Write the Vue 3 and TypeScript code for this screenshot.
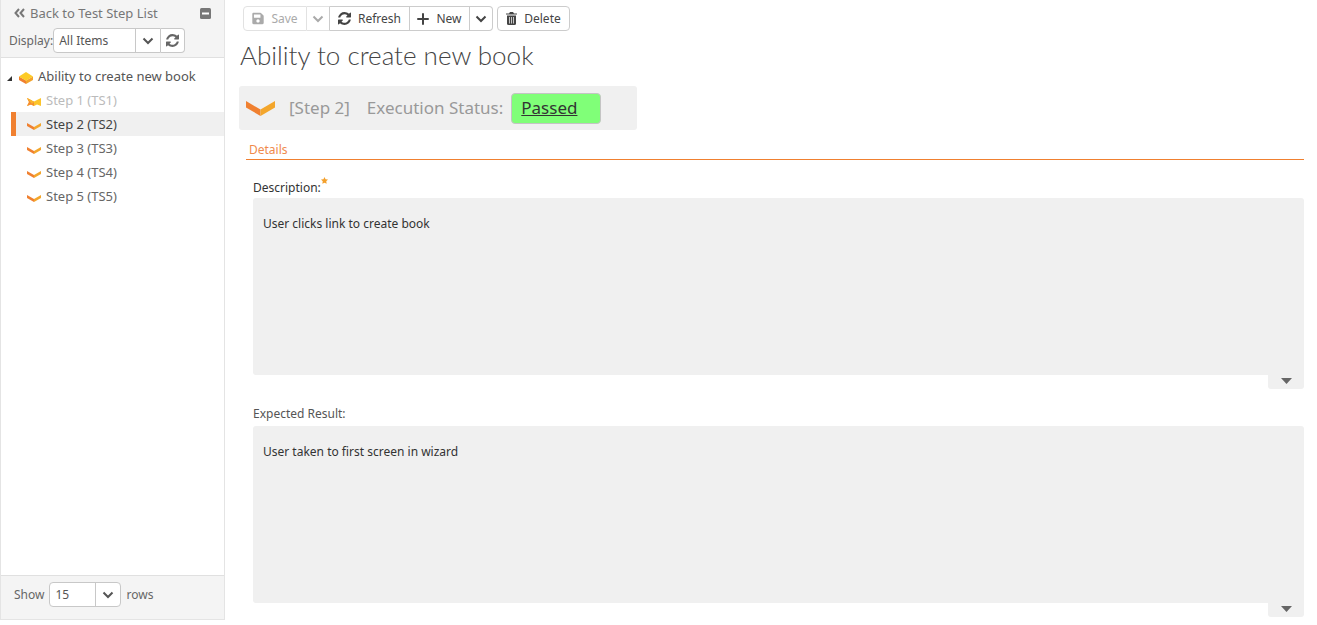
<script setup lang="ts">
import { ref } from 'vue'

interface Step {
  id: number
  name: string
  muted?: boolean
}

const steps: Step[] = [
  { id: 1, name: 'Step 1 (TS1)', muted: true },
  { id: 2, name: 'Step 2 (TS2)' },
  { id: 3, name: 'Step 3 (TS3)' },
  { id: 4, name: 'Step 4 (TS4)' },
  { id: 5, name: 'Step 5 (TS5)' },
]
const selected = ref(2)
const display = ref('All Items')
const rows = ref('15')
const description = ref('User clicks link to create book')
const expected = ref('User taken to first screen in wizard')

const refreshPath =
  'M1511 1056q0 5-1 7-64 268-268 434.5t-478 166.5q-146 0-282.5-55t-243.5-157l-129 129q-19 19-45 19t-45-19-19-45v-448q0-26 19-45t45-19h448q26 0 45 19t19 45-19 45l-137 137q71 66 161 102t187 36q134 0 250-65t186-179q11-17 53-117 8-23 30-23h192q13 0 22.5 9.5t9.5 22.5zm25-800v448q0 26-19 45t-45 19h-448q-26 0-45-19t-19-45 19-45l138-138q-148-137-349-137-134 0-250 65t-186 179q-11 17-53 117-8 23-30 23h-199q-13 0-22.5-9.5t-9.5-22.5v-7q65-268 270-434.5t480-166.5q146 0 284 55.5t245 156.5l130-129q19-19 45-19t45 19 19 45z'
const savePath =
  'M433.941 129.941l-83.882-83.882A48 48 0 0 0 316.118 32H48C21.49 32 0 53.49 0 80v352c0 26.51 21.49 48 48 48h352c26.51 0 48-21.49 48-48V163.882a48 48 0 0 0-14.059-33.941zM224 416c-35.346 0-64-28.654-64-64s28.654-64 64-64 64 28.654 64 64-28.654 64-64 64zm96-304.52V212c0 6.627-5.373 12-12 12H76c-6.627 0-12-5.373-12-12V108c0-6.627 5.373-12 12-12h228.52c3.183 0 6.235 1.264 8.485 3.515l3.48 3.48A11.996 11.996 0 0 1 320 111.48z'
</script>

<template>
  <div class="page">
    <aside class="sidebar">
      <header class="side-head">
        <div class="side-top">
          <a href="#" class="back">
            <svg width="11" height="10" viewBox="0 0 11 10" class="line-icon"><path d="M5 1L1.500 5L5 9M10 1L6.500 5L10 9" /></svg>
            Back to Test Step List
          </a>
          <button type="button" class="collapse" aria-label="Collapse">
            <svg width="11" height="11" viewBox="0 0 11 11"><rect width="11" height="11" rx="1.500" fill="#777" /><rect x="2" y="4.500" width="7" height="2" fill="#fff" /></svg>
          </button>
        </div>
        <div class="display-row">
          <label for="display">Display:</label>
          <div class="combo joined">
            <select id="display" v-model="display" class="wide"><option>All Items</option></select>
            <span class="arrow"><svg width="12" height="8" viewBox="0 0 12 8" class="line-icon"><path d="M1.500 1.500L6 6L10.500 1.500" /></svg></span>
          </div>
          <button type="button" class="reload" aria-label="Reload list">
            <svg width="13" height="13" viewBox="0 128 1536 1536"><path :d="refreshPath" fill="#666" /></svg>
          </button>
        </div>
      </header>

      <nav class="tree">
        <a href="#" class="root">
          <svg class="caret" width="5" height="5" viewBox="0 0 5 5"><path d="M5 0V5H0Z" fill="#333" /></svg>
          <svg class="box" width="14" height="12" viewBox="0 0 14 12"><path d="M0 4.500L7 8.500V12L0 8Z" fill="#f08030" /><path d="M14 4.500L7 8.500V12L14 8Z" fill="#f3a32c" /><path d="M7 0L14 4.500L7 8.700L0 4.500Z" fill="#fdcb27" /></svg>
          <span>Ability to create new book</span>
        </a>
        <a
          v-for="step in steps"
          :key="step.id"
          href="#"
          class="step"
          :class="{ active: step.id === selected, muted: step.muted }"
          @click.prevent="selected = step.id"
        >
          <svg v-if="step.muted" width="14" height="8" viewBox="0 0 14 8"><path d="M0 0L4 2L7 3.500L10 2L14 0V8L10 6.500L7 8L4 6.500L0 8L2 4Z" fill="#fcc42a" /><path d="M0 0L7 4V8L4 6.500L0 8L2 4Z" fill="#f58a32" /><path d="M0 0L3 1.500L7 4L5 6Z" fill="#f9b52c" /></svg>
          <svg v-else width="14" height="7" viewBox="0 0 28 14"><path d="M0 0L14 8V14L0 6Z" fill="#f08030" /><path d="M28 0L14 8V14L28 6Z" fill="#f3a62c" /></svg>
          <span>{{ step.name }}</span>
        </a>
      </nav>

      <footer class="side-foot">
        <label for="rows">Show</label>
        <div class="combo">
          <select id="rows" v-model="rows" class="narrow"><option>15</option></select>
          <span class="arrow"><svg width="12" height="8" viewBox="0 0 12 8" class="line-icon"><path d="M1.500 1.500L6 6L10.500 1.500" /></svg></span>
        </div>
        <span>rows</span>
      </footer>
    </aside>

    <main class="main">
      <div class="toolbar">
        <div class="group">
          <button type="button" disabled class="save"><svg width="12" height="13" viewBox="0 0 448 512"><path :d="savePath" fill="currentColor" /></svg>Save</button>
          <button type="button" disabled class="drop" aria-label="Save options"><svg width="12" height="8" viewBox="0 0 12 8" class="line-icon"><path d="M1.500 1.500L6 6L10.500 1.500" /></svg></button>
          <button type="button" class="refresh"><svg width="13" height="13" viewBox="0 128 1536 1536"><path :d="refreshPath" fill="currentColor" /></svg>Refresh</button>
          <button type="button" class="new"><svg width="12" height="12" viewBox="0 0 12 12"><path d="M6 1V11M1 6H11" stroke="currentColor" stroke-width="2" stroke-linecap="round" /></svg>New</button>
          <button type="button" class="drop" aria-label="New options"><svg width="12" height="8" viewBox="0 0 12 8" class="line-icon"><path d="M1.500 1.500L6 6L10.500 1.500" /></svg></button>
        </div>
        <div class="group">
          <button type="button" class="delete"><svg width="11" height="13" viewBox="0 0 11 13"><path d="M0 1.500H3L4 0H7L8 1.500H11V2.500H0Z" fill="currentColor" /><path d="M1 3.500H10V11.500Q10 13 8.500 13H2.500Q1 13 1 11.500Z" fill="currentColor" /><path d="M3.500 5V11.500M5.500 5V11.500M7.500 5V11.500" stroke="#fff" stroke-width=".7" /></svg>Delete</button>
        </div>
      </div>

      <h1>Ability to create new book</h1>

      <section class="status">
        <svg width="29" height="15" viewBox="0 0 28 14" preserveAspectRatio="none"><path d="M0 0L14 8V14L0 6Z" fill="#f08030" /><path d="M28 0L14 8V14L28 6Z" fill="#f3a62c" /></svg>
        <span class="step-no">[Step 2]</span>
        <span class="status-label">Execution Status:</span>
        <span class="badge"><a href="#">Passed</a></span>
      </section>

      <section class="details">
        <h2>Details</h2>
        <div class="field">
          <label for="description" class="required">Description:<svg width="7" height="7" viewBox="0 0 10 10"><path d="M5 0L6.500 3.200L10 3.700L7.500 6.200L8.100 9.800L5 8.100L1.900 9.800L2.500 6.200L0 3.700L3.500 3.200Z" fill="#f3a02c" /></svg></label>
          <textarea id="description" v-model="description"></textarea>
          <button type="button" class="expand" aria-label="Show description toolbar"><svg width="11" height="6" viewBox="0 0 11 6"><path d="M0 0H11L5.500 6Z" fill="#666" /></svg></button>
        </div>
        <div class="field">
          <label for="expected">Expected Result:</label>
          <textarea id="expected" v-model="expected"></textarea>
          <button type="button" class="expand" aria-label="Show expected result toolbar"><svg width="11" height="6" viewBox="0 0 11 6"><path d="M0 0H11L5.500 6Z" fill="#666" /></svg></button>
        </div>
      </section>
    </main>
  </div>
</template>

<style>
body {
  margin: 0;
  background: #fff;
}
</style>

<style scoped>
* {
  box-sizing: border-box;
}
.page {
  display: grid;
  grid-template-columns: 225px 1fr;
  align-items: start;
  font: 12px/18px "Noto Sans", "Open Sans", sans-serif;
  color: #666;
}
a {
  color: inherit;
  text-decoration: none;
}
button,
select,
textarea {
  font: inherit;
  color: inherit;
  margin: 0;
}
button {
  display: flex;
  align-items: center;
  justify-content: center;
  padding: 0;
  border: 0;
  background: none;
}
svg {
  flex: none;
}
.line-icon {
  fill: none;
  stroke: currentColor;
  stroke-width: 2;
}
.sidebar {
  display: flex;
  flex-direction: column;
  min-height: calc(100vh - 5px);
  border: 1px solid #e4e4e4;
  border-top: 0;
}
.side-head {
  background: #f4f4f4;
  border-bottom: 1px solid #e0e0e0;
  padding: 4px 13px 4px 8px;
}
.side-top {
  display: flex;
  justify-content: space-between;
  align-items: center;
  padding-left: 5px;
  height: 18px;
}
.back {
  display: flex;
  align-items: center;
  gap: 5px;
  font-size: 13px;
  color: #777;
}
.display-row {
  display: flex;
  align-items: center;
  height: 25px;
  margin-top: 6px;
}
.combo {
  display: flex;
  height: 25px;
  border: 1px solid #c8c8c8;
  border-radius: 4px;
  background: #fff;
  color: #555;
}
.joined {
  border-radius: 4px 0 0 4px;
}
.combo select {
  appearance: none;
  border: 0;
  background: none;
  padding: 0 5px;
  outline: 0;
}
.wide {
  width: 81px;
}
.narrow {
  width: 45px;
}
.arrow {
  display: flex;
  align-items: center;
  justify-content: center;
  width: 25px;
  border-left: 1px solid #c8c8c8;
}
.reload {
  width: 24px;
  height: 25px;
  background: #fff;
  border: 1px solid #c8c8c8;
  border-left: 0;
  border-radius: 0 4px 4px 0;
}
.tree {
  flex: 1;
  padding-top: 5px;
  font-size: 13px;
}
.root,
.step {
  display: flex;
  align-items: center;
  height: 24px;
}
.root {
  height: 25px;
  color: #555;
  padding-left: 6px;
}
.caret {
  margin: 6px 6px 0 0;
}
.box {
  margin: 4px 5px 0 1px;
}
.step {
  gap: 5px;
  margin-left: 10px;
  padding-left: 16px;
}
.step svg {
  margin-top: 4px;
}
.step.muted {
  color: #bbb;
}
.step.active {
  color: #444;
  background: #f0f0f0;
  border-left: 5px solid #f08030;
  padding-left: 11px;
}
.side-foot {
  display: flex;
  align-items: center;
  gap: 5px;
  height: 44px;
  padding: 0 13px 6px;
  background: #f4f4f4;
  border-top: 1px solid #e0e0e0;
}
.main {
  padding: 6px 13px 8px 14px;
}
.toolbar {
  display: flex;
  gap: 4px;
  padding-left: 4px;
}
.group {
  display: flex;
}
.group button {
  height: 25px;
  border: 1px solid #ccc;
  border-left-width: 0;
  background: #fff;
  color: #444;
  gap: 7px;
}
.group button:first-child {
  border-left-width: 1px;
  border-radius: 4px 0 0 4px;
}
.group button:last-child {
  border-radius: 0 4px 4px 0;
}
.group button:only-child {
  border-radius: 4px;
}
.group button:disabled {
  color: #aaa;
  border-color: #e2e2e2;
}
.group .save {
  width: 64px;
}
.group .drop {
  width: 23px;
}
.group .drop:disabled {
  border-right-color: #ccc;
}
.group .refresh {
  width: 80px;
}
.group .new {
  width: 60px;
}
.group .delete {
  width: 73px;
}
h1 {
  margin: 6px 0 12px 1px;
  font: 300 26px/37px Lato, sans-serif;
  color: #444;
}
.status {
  display: flex;
  align-items: center;
  width: 398px;
  height: 44px;
  padding: 0 7px;
  border-radius: 3px;
  background: #f0f0f0;
  font-size: 17px;
  line-height: 24px;
  color: #999;
}
.step-no {
  margin-left: 14px;
}
.status-label {
  margin-left: 17px;
}
.badge {
  width: 90px;
  height: 31px;
  margin-left: 8px;
  padding: 2px 9px;
  border: 1px solid #c4c4c4;
  border-radius: 4px;
  background: #80ff78;
  color: #333;
}
.badge a {
  text-decoration: underline;
}
.details {
  margin: 11px 0 0 7px;
}
h2 {
  margin: 0;
  padding: 0 3px;
  border-bottom: 1px solid #f08030;
  font-size: 12px;
  font-weight: 400;
  line-height: 18px;
  color: #f08a4c;
}
.field {
  display: flex;
  flex-direction: column;
  margin: 15px 0 0 7px;
}
.field + .field {
  margin-top: 14px;
}
.field label {
  height: 23px;
  line-height: 22px;
  color: #555;
}
.field .required {
  display: flex;
  align-items: flex-start;
  color: #333;
  padding-top: 2px;
}
textarea {
  width: 100%;
  height: 177px;
  padding: 17px 10px;
  border: 0;
  border-radius: 3px 3px 0 3px;
  outline: 0;
  resize: none;
  background: #f0f0f0;
  color: #333;
}
.expand {
  align-self: flex-end;
  width: 36px;
  height: 14px;
  padding-bottom: 2px;
  border-radius: 0 0 3px 3px;
  background: #f0f0f0;
}
</style>
